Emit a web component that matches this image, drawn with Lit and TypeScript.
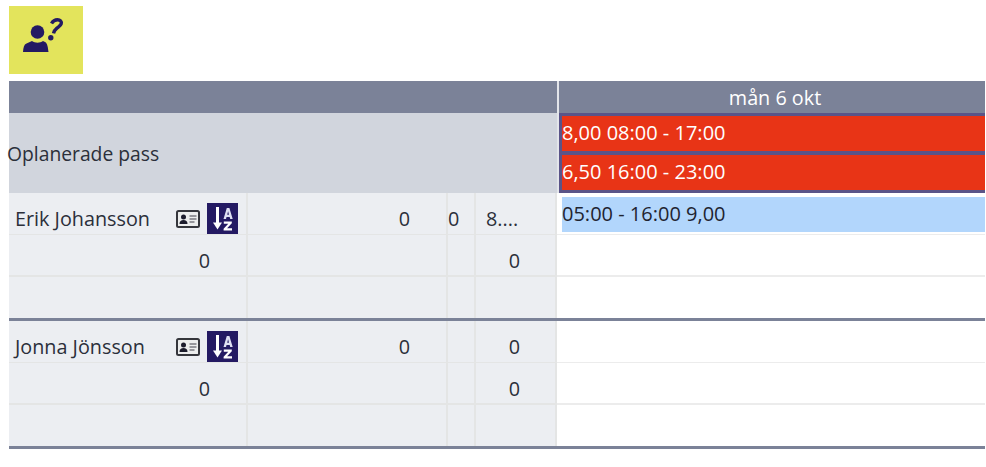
import { LitElement, html, css, svg } from "lit";
import { customElement } from "lit/decorators.js";

const cardIcon = svg`<svg class="card" viewBox="0 0 24 18" width="24" height="18">
<rect x="1" y="1" width="22" height="16" rx="1.500" fill="#eceded" stroke="#35363c" stroke-width="2"/>
<circle cx="7.500" cy="7" r="2.500" fill="#1c1c2c"/>
<path d="M3.500 14c0-3 1.600-4 4-4s4 1 4 4z" fill="#1c1c2c"/>
<path d="M13.500 6h7M13.500 9h7M13.500 12h5" stroke="#7a7a80" stroke-width="1.500"/>
</svg>`;

const sortIcon = svg`<svg class="sort" viewBox="0 0 31 31" width="31" height="31">
<rect width="31" height="31" fill="#241a63"/>
<path d="M10.500 4v17" stroke="#fff" stroke-width="3"/>
<path d="M6 19.500h9L10.500 26.500z" fill="#fff"/>
<path d="M16.500 16l3.300-11h2.600l3.300 11h-2.500l-.5-2h-3.200l-.5 2zM20.200 11.800h1.800l-.9-3.500z" fill="#dfe0f2" fill-rule="evenodd"/>
<path d="M16.800 18.500h8v1.800l-4.700 5h4.900v2.200h-8.400v-1.800l4.700-5h-4.500z" fill="#fff"/>
</svg>`;

const personIcon = svg`<svg viewBox="9 6 74 68" width="74" height="68">
<circle cx="37.500" cy="32" r="6.800" fill="#241a63"/>
<path d="M23 52c.3-4.500 1-7.500 3.500-8.500l5.500-2.500c3 2.200 8 2.200 11 0l2 1c2.500 1 3 6 3.500 10z" fill="#241a63"/>
<path d="M51.500 23.500c1.500-2.600 3.700-3.700 6-3.700 2.700 0 4.300 1.700 3.700 4-.5 2-2.600 3-4.500 4.500-1.500 1.200-2.600 2.500-3.200 5" fill="none" stroke="#241a63" stroke-width="3.400"/>
<circle cx="50.800" cy="37.800" r="2.700" fill="#241a63"/>
</svg>`;

@customElement("app-root")
export class AppRoot extends LitElement {
  static styles = css`
    :host {
      display: block;
      width: 986px;
      height: 467px;
      overflow: hidden;
      background: #fff;
      font-family: "Open Sans", "Noto Sans", sans-serif;
      font-size: 19.800px;
      color: #2b2f3a;
      box-sizing: border-box;
      padding: 6px 1px 0 9px;
    }
    .flag {
      width: 74px;
      height: 68px;
      background: #e3e45c;
      margin-bottom: 7px;
    }
    .flag svg { display: block; }
    .row {
      display: grid;
      grid-template-columns: 548px 2px 1fr;
    }
    .head {
      height: 32px;
      background: #7b8298;
      color: #fff;
    }
    .head .sep, .plan .sep { background: #e3e5ea; }
    .date {
      display: flex;
      align-items: center;
      justify-content: center;
      padding-left: 6px;
    }
    .plan { height: 80px; }
    .plan-label {
      background: #d1d5dd;
      display: flex;
      align-items: center;
      font-size: 19.300px;
    }
    .plan-label span { margin-left: -2px; }
    .plan-shifts {
      background: #5a5488;
      padding: 3px 0 3px 3px;
      display: flex;
      flex-direction: column;
      gap: 4px;
    }
    .red {
      flex: 1;
      background: #e83416;
      color: #fff;
      display: flex;
      align-items: center;
      padding-bottom: 2px;
      box-sizing: border-box;
      white-space: nowrap;
      font-size: 20px;
    }
    .group { border-bottom: 3px solid #7b8298; }
    .line {
      display: grid;
      grid-template-columns: 239px 200px 28px 81px 1fr;
      height: 42px;
    }
    .line:last-child { height: 41px; }
    .cell {
      background: #eceef2;
      border-right: 2px solid #e4e5e5;
      border-bottom: 2px solid #e4e5e5;
      display: flex;
      align-items: center;
      justify-content: flex-end;
      box-sizing: border-box;
      white-space: nowrap;
      padding-top: 10px;
    }
    .line:last-child .cell { border-bottom: 0; padding-top: 0; }
    .c1 { padding-right: 36px; }
    .c2 { padding-right: 36px; }
    .c3 { justify-content: flex-start; padding-left: 0; }
    .c4 { padding-right: 35px; }
    .c4.txt { justify-content: flex-start; padding-left: 10px; padding-right: 0; }
    .name {
      justify-content: flex-start;
      padding-left: 6px;
    }
    .name span { flex: 1; }
    .name .card { margin-right: 7px; flex: none; }
    .name .sort { margin-right: 8px; flex: none; }
    .c5 {
      background: #fff;
      border-bottom: 2px solid #ececec;
      padding: 4px 0 0 5px;
      box-sizing: border-box;
    }
    .line:last-child .c5 { border-bottom: 0; }
    .blue {
      height: 35px;
      background: #b2d6fc;
      color: #1f2430;
      display: flex;
      align-items: center;
      padding-bottom: 2px;
      box-sizing: border-box;
      white-space: nowrap;
      font-size: 20px;
    }
  `;

  private renderGroup(name: string, c3: string, c4: string, blue: string) {
    return html`<div class="group">
      <div class="line">
        <div class="cell name"><span>${name}</span>${cardIcon}${sortIcon}</div>
        <div class="cell c2">0</div>
        <div class="cell c3">${c3}</div>
        <div class="cell c4 ${c4 === "8...." ? "txt" : ""}">${c4}</div>
        <div class="c5">${blue ? html`<div class="blue">${blue}</div>` : ""}</div>
      </div>
      <div class="line">
        <div class="cell c1">0</div>
        <div class="cell"></div>
        <div class="cell"></div>
        <div class="cell c4">0</div>
        <div class="c5"></div>
      </div>
      <div class="line">
        <div class="cell"></div>
        <div class="cell"></div>
        <div class="cell"></div>
        <div class="cell"></div>
        <div class="c5"></div>
      </div>
    </div>`;
  }

  render() {
    return html`
      <div class="flag">${personIcon}</div>
      <div class="row head">
        <div></div>
        <div class="sep"></div>
        <div class="date">mån 6 okt</div>
      </div>
      <div class="row plan">
        <div class="plan-label"><span>Oplanerade pass</span></div>
        <div class="sep"></div>
        <div class="plan-shifts">
          <div class="red">8,00 08:00 - 17:00</div>
          <div class="red">6,50 16:00 - 23:00</div>
        </div>
      </div>
      ${this.renderGroup("Erik Johansson", "0", "8....", "05:00 - 16:00 9,00")}
      ${this.renderGroup("Jonna Jönsson", "", "0", "")}
    `;
  }
}
